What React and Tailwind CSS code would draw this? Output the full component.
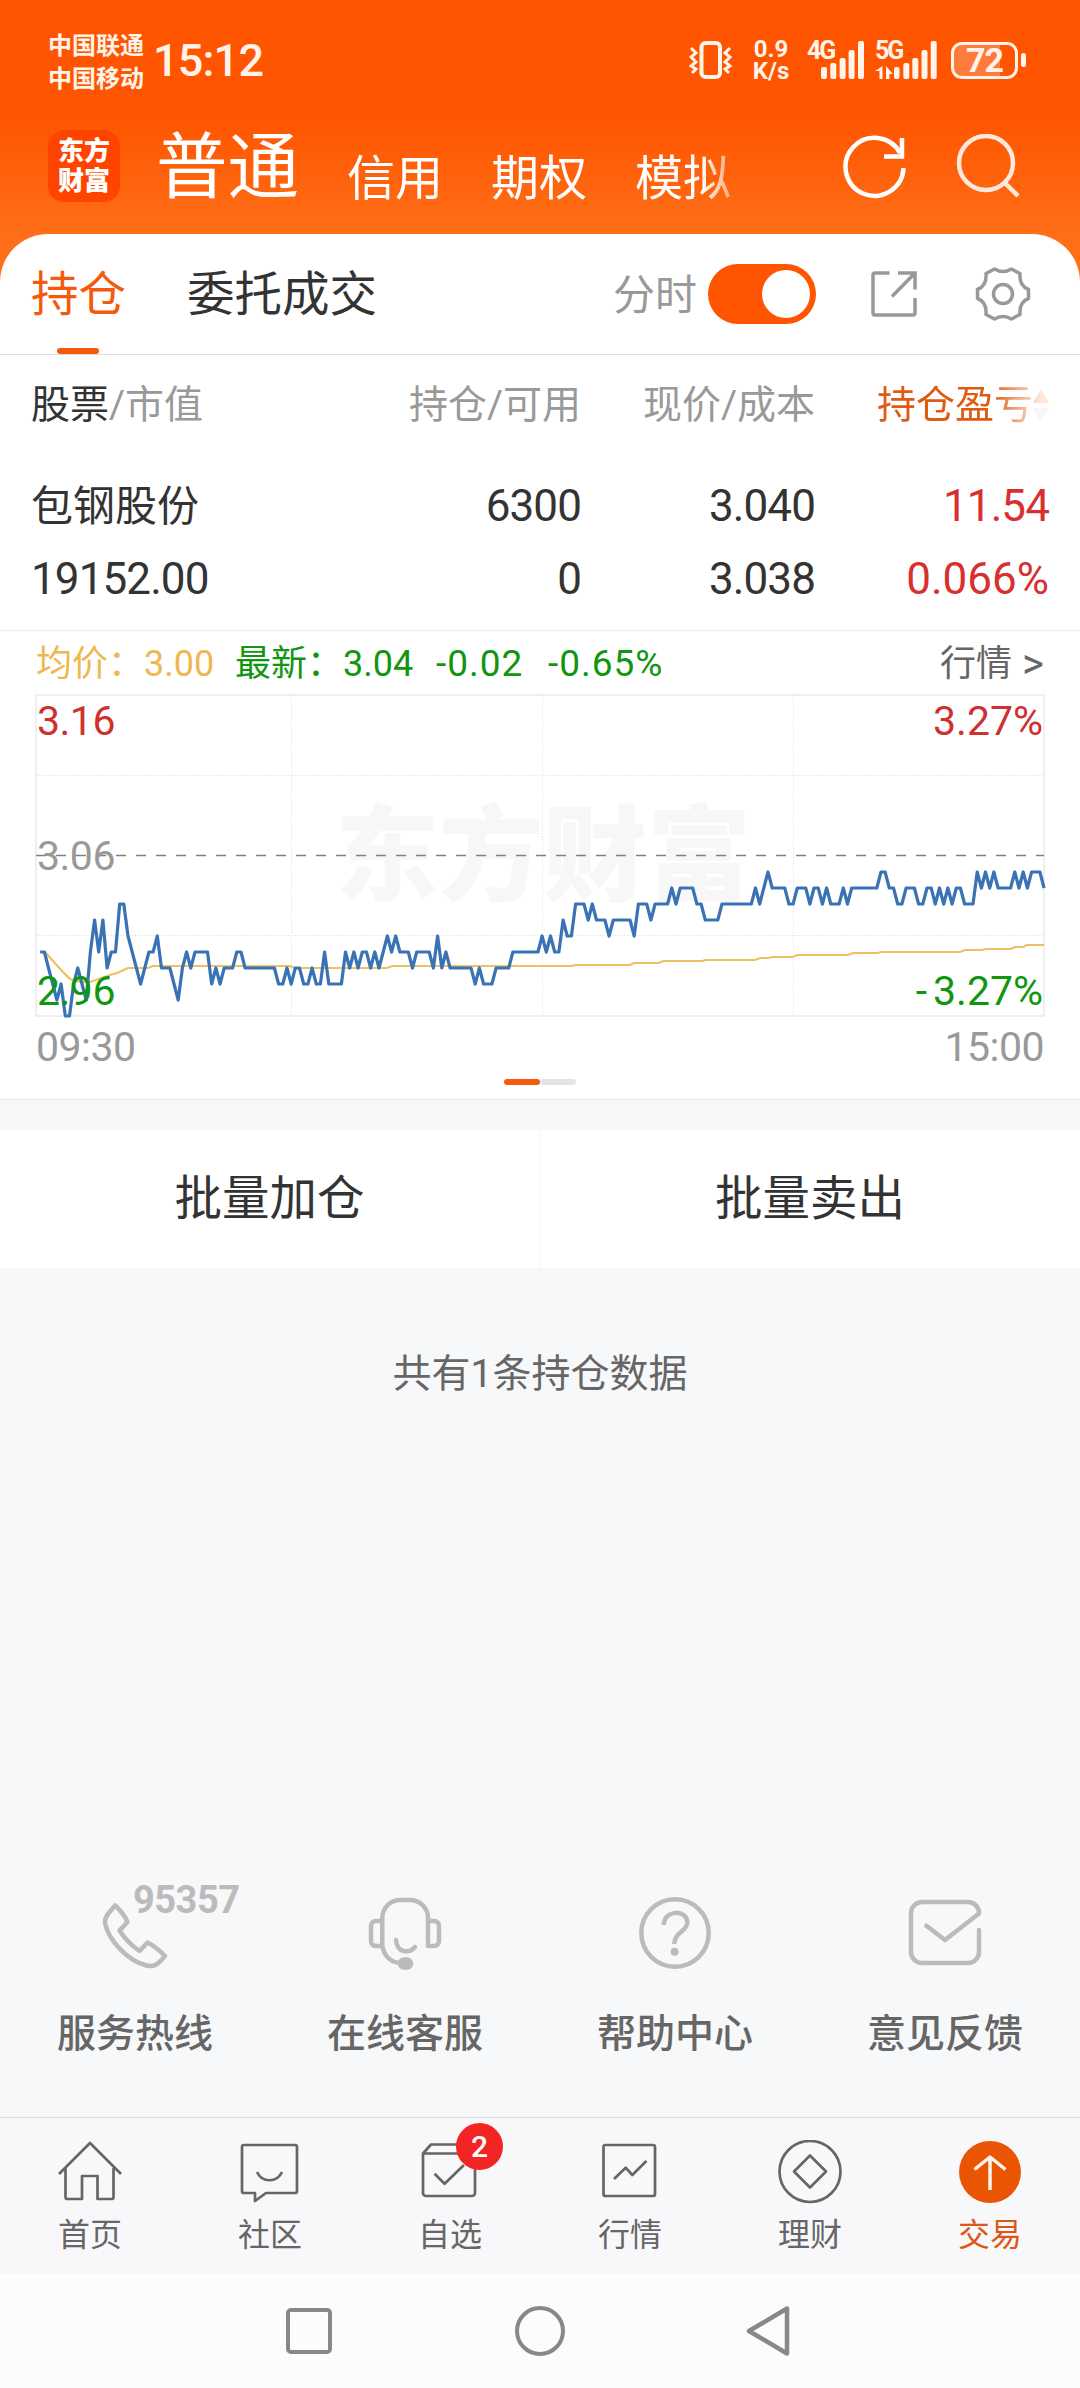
import React, { useState } from "react";

// one digit per minute, steps of 0.01 above 2.96
const ticks =
  "4432120023" +
  "2146463447" +
  "7543234453" +
  "3321343444" +
  "4232333443" +
  "3333333223" +
  "2332232242" +
  "2224343443" +
  "4345454443" +
  "4444353433" +
  "3333232223" +
  "3334444444" +
  "5454465577" +
  "7676665666" +
  "6657776777" +
  "7878888776" +
  "6667777777" +
  "7878988887" +
  "7888788787" +
  "7787888888" +
  "8998877888" +
  "7788787878" +
  "8777989898" +
  "8889898999" +
  "8";

const averageLine =
  "40,262 45,262 53,271 62,281 70,289 80,292 90,292 110,285 117,283 128,278 148,278 153,276 290,276 295,278 387,278 392,276 572,276 575,275 630,275 634,273 659,273 663,271 702,271 706,270 755,270 760,268 768,268 773,267 793,267 797,265 848,265 853,263 877,263 882,262 960,262 965,260 982,260 986,259 1011,259 1015,257 1023,257 1027,255 1044,255";

const priceLine = ticks
  .split("")
  .map((t, i) => `${(36 + (i + 1) * 4.183).toFixed(1)},${326 - Number(t) * 16}`)
  .join(" ");

const StatusBar = () => (
  <div className="flex h-[118px] items-center pl-12 pr-[54px] pt-[2px] text-[#fff3ea]">
    <div className="pt-[5px] text-[24px] font-bold leading-[33px]">
      <p>中国联通</p>
      <p>中国移动</p>
    </div>
    <p className="ml-[9px] text-[45px] font-medium leading-none tracking-[-0.8px]">15:12</p>
    <svg className="ml-auto h-[38px] w-[44px]" viewBox="0 0 44 38" fill="none" stroke="currentColor">
      <rect x="12.5" y="2" width="18.5" height="34" rx="4" strokeWidth="4" />
      <path
        d="M2 7l5 5-5 4 5 5-5 4 5 3-4 4M41 7l-5 5 5 4-5 5 5 4-5 3 4 4"
        strokeWidth="3"
      />
    </svg>
    <div className="ml-[18px] flex h-[42px] w-[40px] flex-col justify-between text-center text-[24px] font-bold leading-[20px]">
      <p>0.9</p>
      <p>K/s</p>
    </div>
    <div className="relative ml-[16px] h-[38px] w-[60px]">
      <span className="absolute left-0 top-0 text-[25px] font-bold leading-[20px] tracking-[-2px]">4G</span>
      <svg className="h-[38px] w-[60px]" viewBox="0 0 60 38" fill="currentColor">
        <rect x="14" y="26" width="6" height="12" rx="2" />
        <rect x="23.3" y="22" width="6" height="16" rx="2" />
        <rect x="32.6" y="17" width="6" height="21" rx="2" />
        <rect x="41.6" y="9" width="6" height="29" rx="2" />
        <rect x="51" y="0" width="6" height="38" rx="2" />
      </svg>
    </div>
    <div className="relative ml-[8px] h-[38px] w-[64px]">
      <span className="absolute left-0 top-0 text-[25px] font-bold leading-[20px] tracking-[-2px]">5G</span>
      <svg className="h-[38px] w-[64px]" viewBox="0 0 64 38" fill="currentColor">
        <path d="M7.500 25v13h-3v-8H0zM11 25l7 8h-3.500v5H11z" />
        <rect x="19" y="26" width="5.500" height="12" rx="2" />
        <rect x="28.300" y="22" width="6" height="16" rx="2" />
        <rect x="37.300" y="17" width="6" height="21" rx="2" />
        <rect x="46.500" y="9" width="6" height="29" rx="2" />
        <rect x="55.700" y="0" width="6" height="38" rx="2" />
      </svg>
    </div>
    <div className="ml-[12px] flex items-center gap-[3px]">
      <div className="flex h-[37px] w-[67px] items-center justify-center rounded-[11px] border-[3.500px] border-[#fff3ea] bg-[linear-gradient(90deg,#ff7b3c_75%,transparent_75%)] text-[34px] font-bold leading-none tracking-[-1px]">
        72
      </div>
      <div className="h-[14px] w-[5px] rounded-full bg-[#fff3ea]" />
    </div>
  </div>
);

const TitleBar = () => (
  <div className="flex h-[116px] items-start pl-12 pr-[60px] text-white">
    <div className="mt-[12px] flex h-[72px] w-[72px] flex-col items-center justify-center rounded-[16px] bg-[#ff4400] text-[26px] font-black leading-[30px]">
      <span>东方</span>
      <span>财富</span>
    </div>
    <div className="ml-[36px] flex h-[85px] items-end gap-12 text-[48px] leading-none [mask-image:linear-gradient(90deg,#000_545px,transparent_600px)]">
      <span className="text-[71.5px]">普通</span>
      <span>信用</span>
      <span>期权</span>
      <span>模拟</span>
    </div>
    <svg className="ml-auto mt-[16px] h-[66px] w-[66px]" viewBox="0 0 66 66" fill="none" stroke="currentColor" strokeWidth="4.500">
      <path d="M62.500 34A29 29 0 1 1 59 19" />
      <path d="M61 4v18.500H43" />
    </svg>
    <svg className="ml-[47px] mt-[16px] h-[66px] w-[66px] text-[#ffe9dc]" viewBox="0 0 66 66" fill="none" stroke="currentColor" strokeWidth="4.500">
      <circle cx="32" cy="29" r="27" />
      <path d="M50 48l14 14" />
    </svg>
  </div>
);

const Tabs = ({ minute, setMinute }) => (
  <div className="flex h-[121px] items-center border-b border-[#dedede] pl-[31px] pr-[49px]">
    <div className="relative flex h-[120px] items-center pt-[3px] text-[47.500px] leading-none text-[#f45a0c]">
      <span>持仓</span>
      <i className="absolute bottom-0 left-[26px] h-[6px] w-[42px] rounded-full bg-[#f45a0c]" />
    </div>
    <span className="ml-[61px] pt-[3px] text-[47.500px] leading-none text-[#333]">委托成交</span>
    <span className="ml-auto pt-[3px] text-[42px] leading-none text-[#999]">分时</span>
    <button
      onClick={() => setMinute(!minute)}
      className={`ml-[11px] flex h-[60px] w-[108px] items-center rounded-full px-[6px] ${minute ? "justify-end bg-[#ff5500]" : "justify-start bg-gray-300"}`}
    >
      <span className="h-[48px] w-[48px] rounded-full bg-white" />
    </button>
    <svg className="ml-[55px] h-[46px] w-[46px]" viewBox="0 0 46 46" fill="none" stroke="#999" strokeWidth="3.500">
      <path d="M18.500 2H4a2 2 0 0 0-2 2v38a2 2 0 0 0 2 2h38a2 2 0 0 0 2-2V27" />
      <path d="M27 2h17v16.500M44 2L21 25.500" />
    </svg>
    <svg className="ml-[58px] h-[56px] w-[56px]" viewBox="-28 -28 56 56" fill="none" stroke="#999" strokeWidth="3.500" strokeLinejoin="round">
      <path d="M-8.500 -25Q0 -20 8.500 -25L17 -20.500Q16 -8 25.500 -4.500V4.500Q16 8 17 20.500L8.500 25Q0 20 -8.500 25L-17 20.500Q-16 8 -25.500 4.500V-4.500Q-16 -8 -17 -20.500Z" />
      <circle r="9.500" />
    </svg>
  </div>
);

const Holdings = () => (
  <div className="h-[276px] border-b border-[#ececec] pl-[31px] pr-[31px]">
    <div className="grid h-[98px] grid-cols-[320px_230px_234px_234px] items-center pt-[2px] text-[39px] leading-none text-[#999]">
      <p>
        <span className="text-[#333]">股票</span>/市值
      </p>
      <p className="text-right">持仓/可用</p>
      <p className="text-right">现价/成本</p>
      <p className="flex items-center justify-end text-[#df5a12] [mask-image:linear-gradient(90deg,#000_175px,rgba(0,0,0,0.15)_225px)]">
        <span>持仓盈亏</span>
        <svg className="h-[36px] w-[16px]" viewBox="0 0 16 36">
          <path d="M8 2l8 14H0z" fill="#ff5500" />
          <path d="M8 35l8-14H0z" fill="#ccc" />
        </svg>
      </p>
    </div>
    <div className="grid grid-cols-[320px_230px_234px_234px] pt-[17px] text-[44px] leading-[72px] tracking-[-0.9px] text-[#333]">
      <p className="pt-px text-[42px] tracking-normal">包钢股份</p>
      <p className="text-right">6300</p>
      <p className="text-right">3.040</p>
      <p className="text-right text-[#d8302f]">11.54</p>
      <p>19152.00</p>
      <p className="text-right">0</p>
      <p className="text-right">3.038</p>
      <p className="text-right tracking-normal text-[#d8302f]">0.066%</p>
    </div>
  </div>
);

const MinuteChart = () => (
  <div className="h-[469px] border-b border-[#e9e9e9]">
    <div className="flex h-[59px] items-center pl-[36px] pr-[36px] pt-[6px] text-[36px] leading-none text-[#119611]">
      <span className="w-[199px] text-[#efb751]">均价：3.00</span>
      <span className="w-[201px]">最新：3.04</span>
      <span className="w-[112px] text-[37px] tracking-[1px]">-0.02</span>
      <span className="text-[37px] tracking-[1px]">-0.65%</span>
      <span className="ml-auto flex items-center gap-[10px] text-[#666]">
        行情 <span className="text-[42px]">&gt;</span>
      </span>
    </div>
    <div className="relative h-[336px] text-[41px] leading-none tracking-[-0.500px]">
      <p className="absolute left-[335px] top-[116px] text-[104px] font-black leading-none tracking-normal text-[#f7f7f7]">
        东方财富
      </p>
      <svg className="absolute left-0 top-0 h-[336px] w-full" viewBox="0 0 1080 336" fill="none">
        <rect x="36" y="5" width="1008" height="321" stroke="#efefef" strokeWidth="2" />
        <path d="M36 85.500H1044M36 245.500H1044M291.500 5V326M542.500 5V326M793.500 5V326" stroke="#e6e6e6" strokeDasharray="1.500 1.500" />
        <path d="M36 165.500H1044" stroke="#808080" strokeWidth="1.400" strokeDasharray="10 10" />
        <polyline points={averageLine} stroke="#edc15f" strokeWidth="2.200" />
        <polyline points={priceLine} stroke="#3a73b5" strokeWidth="3.200" strokeLinejoin="round" />
      </svg>
      <p className="absolute left-[37px] top-[11px] text-[#d0302f]">3.16</p>
      <p className="absolute left-[37px] top-[146px] text-[#999]">3.06</p>
      <p className="absolute left-[37px] top-[281px] text-[#119611]">2.96</p>
      <p className="absolute right-[37px] top-[11px] tracking-normal text-[#d0302f]">3.27%</p>
      <p className="absolute right-[37px] top-[281px] tracking-normal text-[#119611]">
        <span className="mr-[6px]">-</span>3.27%
      </p>
    </div>
    <div className="flex justify-between px-[36px] text-[41px] leading-[42px] tracking-[-0.500px] text-[#999]">
      <span>09:30</span>
      <span>15:00</span>
    </div>
    <div className="mt-[11px] flex justify-center">
      <i className="h-[6px] w-[36px] rounded-full bg-[#f45a0c]" />
      <i className="h-[6px] w-[36px] rounded-full bg-[#e4e4e4]" />
    </div>
  </div>
);

const services = [
  {
    name: "服务热线",
    icon: (
      <path
        transform="translate(3.500 6)"
        d="M12.700 2.500Q21 10 25 19L17 27.500Q25 40 37 48L45 39.500Q54 44 62.500 53C57 59 53 65 44 62.500C26 58 6 38 2.500 20C1.500 13 8 8 12.700 2.500Z"
      />
    ),
  },
  {
    name: "在线客服",
    icon: (
      <>
        <path d="M13.300 49H7a5 5 0 0 1-5-5V29a5 5 0 0 1 5-5h6.300M13.300 49V21a18 18 0 0 1 18-18h9.700a18 18 0 0 1 18 18v28h6a5 5 0 0 0 5-5V29a5 5 0 0 0-5-5h-6M13.300 48c1 10 8 18 19 18" />
        <path d="M27 43C28 56 40 57 46 50" />
        <rect x="31" y="62.500" width="11" height="8" rx="4" fill="currentColor" />
      </>
    ),
  },
  {
    name: "帮助中心",
    icon: (
      <>
        <circle cx="36" cy="36" r="33.700" />
        <path strokeLinecap="butt" d="M24.800 28c0-15.500 23.500-16 23.500-2.500 0 9-13 9.500-13 21.500" />
        <circle cx="35.600" cy="54.700" r="4" fill="currentColor" stroke="none" />
      </>
    ),
  },
  {
    name: "意见反馈",
    icon: (
      <path d="M17.400 28.700L36 43l34-26.500A11 11 0 0 0 59 5H13A11 11 0 0 0 2 16V55a11 11 0 0 0 11 11H59a11 11 0 0 0 11-11V33" />
    ),
  },
];

const Services = () => (
  <div className="grid h-[222px] grid-cols-4">
    {services.map((item, index) => (
      <div key={index} className="relative flex flex-col items-center">
        <svg
          className="h-[76px] w-[76px] text-[#bbb]"
          viewBox="-2 -2 76 76"
          fill="none"
          stroke="currentColor"
          strokeWidth="4.500"
          strokeLinecap="round"
          strokeLinejoin="round"
        >
          {item.icon}
        </svg>
        {index === 0 && (
          <span className="absolute left-[133px] top-[-14px] text-[38px] font-bold leading-none tracking-[-0.500px] text-[#bbb]">
            95357
          </span>
        )}
        <p className="mt-[44px] text-[39px] font-medium leading-none text-[#666]">{item.name}</p>
      </div>
    ))}
  </div>
);

const tabs = [
  { name: "首页", icon: <path d="M1 34L32 3l31 31M7.500 28v29q0 2 2 2H24V36h15.500v23H53.500q2 0 2-2V28" /> },
  {
    name: "社区",
    icon: (
      <>
        <path d="M6 5h51a2 2 0 0 1 2 2v44a2 2 0 0 1-2 2H28L17 61V53H6a2 2 0 0 1-2-2V7a2 2 0 0 1 2-2z" />
        <path d="M19 32c5 11 20 11 25 0" />
      </>
    ),
  },
  {
    name: "自选",
    icon: (
      <>
        <path d="M5 13.500H57V53a3 3 0 0 1-3 3H8a3 3 0 0 1-3-3zL13 4.500H50L57 13.500" />
        <path d="M16.600 33.700l10 10L46 25" />
      </>
    ),
  },
  {
    name: "行情",
    icon: (
      <>
        <rect x="5.500" y="5" width="51.500" height="51" rx="2" />
        <path d="M16 39l11.700-11.300 6.600 7.300L48.400 21" />
      </>
    ),
  },
  {
    name: "理财",
    icon: (
      <>
        <circle cx="32" cy="31.500" r="30.500" />
        <path d="M32 15.500L48 31.500 32 47.500 16 31.500z" />
      </>
    ),
  },
  {
    name: "交易",
    icon: (
      <>
        <circle cx="32" cy="32" r="31" fill="#ea5504" stroke="none" />
        <path stroke="#fff3ea" strokeWidth="3.500" d="M32 50V17M16.500 29.500L32 17l15.500 12.500" />
      </>
    ),
  },
];

const TabBar = () => (
  <div className="grid h-[157px] grid-cols-6 border-t border-[#dedede] bg-[#f8f8fa] pt-[22px]">
    {tabs.map((tab, index) => (
      <div
        key={index}
        className={`relative flex flex-col items-center ${index === 5 ? "text-[#dd5715]" : "text-[#666]"}`}
      >
        <svg className="h-[64px] w-[64px]" viewBox="0 0 64 64" fill="none" stroke="currentColor" strokeWidth="2.700" strokeLinejoin="round">
          {tab.icon}
        </svg>
        {tab.name === "自选" && (
          <span className="absolute left-[96px] top-[-17px] flex h-[47px] w-[47px] items-center justify-center rounded-full bg-[#f22424] text-[30px] font-medium leading-none text-white">
            2
          </span>
        )}
        <p className="mt-[15px] text-[32px] leading-none">{tab.name}</p>
      </div>
    ))}
  </div>
);

const SystemNav = () => (
  <div className="flex h-[114px] items-center justify-center bg-[#fcfcfc] pr-[4px]">
    <div className="h-[46px] w-[46px] rounded-[5px] border-4 border-[#888]" />
    <div className="ml-[183px] h-[50px] w-[50px] rounded-full border-[4.500px] border-[#888]" />
    <svg className="ml-[181px] h-[52px] w-[44px]" viewBox="0 0 44 52" fill="none" stroke="#888" strokeWidth="4.500" strokeLinejoin="round">
      <path d="M41 3.500v45L3 26z" />
    </svg>
  </div>
);

const App = () => {
  const [minute, setMinute] = useState(true);

  return (
    <div className="flex h-[2388px] w-[1080px] flex-col overflow-hidden bg-[#f7f8fa] font-['Roboto','Noto_Sans_CJK_SC',sans-serif]">
      <div className="bg-[linear-gradient(180deg,#ff5500_0px,#ff5500_115px,#ff6e18_234px)]">
        <StatusBar />
        <TitleBar />
        <div className="rounded-t-[48px] bg-white">
          <Tabs minute={minute} setMinute={setMinute} />
          <Holdings />
        </div>
      </div>
      <div className="bg-white">
        <MinuteChart />
      </div>
      <div className="mt-[30px] grid h-[138px] grid-cols-2 bg-white text-[47.500px] leading-none text-[#333]">
        <button className="border-r border-[#f5f5f5] pt-[2px]">批量加仓</button>
        <button className="pt-[2px]">批量卖出</button>
      </div>
      <p className="mt-[87px] text-center text-[39px] leading-none text-[#666]">共有1条持仓数据</p>
      <div className="mt-auto">
        <Services />
        <TabBar />
        <SystemNav />
      </div>
    </div>
  );
};

export default App;
